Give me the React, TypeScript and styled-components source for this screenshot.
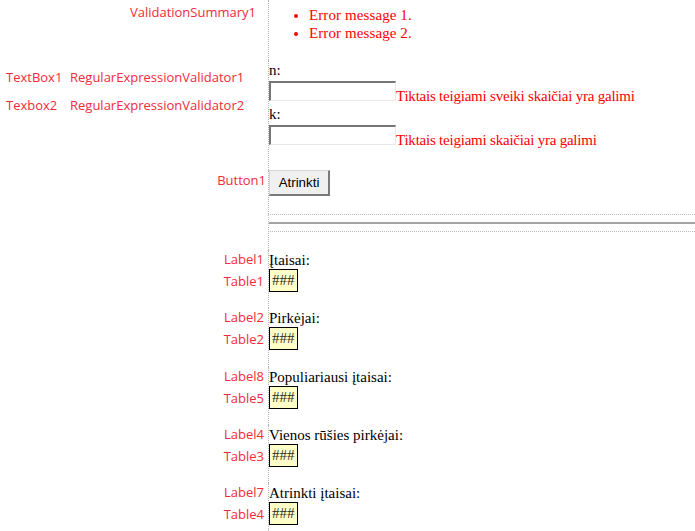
import React from "react";
import styled, { createGlobalStyle } from "styled-components";

const Global = createGlobalStyle`
  html, body { margin: 0; padding: 0; background: #fff; }
  body { width: 695px; height: 531px; overflow: hidden; }
`;

const Page = styled.div`
  display: grid;
  grid-template-columns: 268px 1fr;
  min-height: 531px;
`;

const Annot = styled.div<{ $pt?: number; $pr?: number }>`
  padding-top: ${(p) => p.$pt ?? 0}px;
  padding-right: ${(p) => p.$pr ?? 4}px;
  text-align: right;
  font-family: "Open Sans", "Noto Sans", sans-serif;
  font-size: 13px;
  line-height: 18px;
  color: #f22a3a;
  white-space: nowrap;
`;

const AnnotPairs = styled.div`
  display: grid;
  grid-template-columns: 64px auto;
  align-content: start;
  row-gap: 10px;
  padding: 8px 0 0 6px;
  font-family: "Open Sans", "Noto Sans", sans-serif;
  font-size: 13px;
  line-height: 18px;
  color: #f22a3a;
  white-space: nowrap;
`;

const AnnotStack = styled(Annot)`
  display: flex;
  flex-direction: column;
  align-items: flex-end;
  gap: 4px;
`;

const Content = styled.div<{ $pt?: number; $pb?: number }>`
  border-left: 1px dotted #b4b4b4;
  padding-top: ${(p) => p.$pt ?? 0}px;
  padding-bottom: ${(p) => p.$pb ?? 0}px;
  font-family: "Liberation Serif", "Times New Roman", serif;
  font-size: 15px;
  line-height: 18px;
  color: #000;
  min-width: 0;
`;

const ErrorList = styled.ul`
  margin: 6px 0 18px;
  padding-left: 40px;
  color: #ff0000;
  list-style: disc;
  letter-spacing: 0.1px;
`;

const FieldLabel = styled.div`
  margin-bottom: 2px;
`;

const FieldRow = styled.div`
  display: flex;
  align-items: flex-start;
`;

const TextInput = styled.input`
  box-sizing: border-box;
  width: 127px;
  height: 20px;
  margin: 0;
  padding: 0;
  background: #fff;
  border-style: solid;
  border-width: 2px 1px 1px 2px;
  border-color: #767676 #e8e8e8 #e8e8e8 #767676;
  outline: none;
  flex: none;
`;

const ValidatorMsg = styled.span`
  margin-top: 6px;
  color: #ff0000;
  white-space: nowrap;
  letter-spacing: -0.22px;
`;

const Button = styled.button`
  box-sizing: border-box;
  width: 61px;
  height: 26px;
  margin: 0;
  padding: 0;
  background: #f0f0f0;
  border-style: solid;
  border-width: 1px 2px 2px 1px;
  border-color: #d6d6d6 #7a7a7a #7a7a7a #d6d6d6;
  font-family: "Liberation Sans", Arial, sans-serif;
  font-size: 13.33px;
  color: #000;
  display: block;
`;

const HrBox = styled.div`
  margin-left: -1px;
  border-top: 1px dotted #bcbcbc;
  border-bottom: 1px dotted #bcbcbc;
  border-left: 1px dotted #bcbcbc;
  padding: 7px 0;
`;

const Rule = styled.hr`
  margin: 0;
  height: 2px;
  border: none;
  background: #a3a3a3;
`;

const GroupLabel = styled.div`
  white-space: nowrap;
`;

const DataBox = styled.div`
  box-sizing: border-box;
  width: 29px;
  height: 23px;
  border: 1px solid #000;
  background: #ffffc8;
  padding-left: 2px;
  line-height: 21px;
  color: #2a2a1a;
`;

const groups = [
  { label: "Label1", table: "Table1", text: "Įtaisai:" },
  { label: "Label2", table: "Table2", text: "Pirkėjai:" },
  { label: "Label8", table: "Table5", text: "Populiariausi įtaisai:" },
  { label: "Label4", table: "Table3", text: "Vienos rūšies pirkėjai:" },
  { label: "Label7", table: "Table4", text: "Atrinkti įtaisai:" },
];

export default function App() {
  return (
    <>
      <Global />
      <Page>
        <Annot $pt={3} $pr={12}>ValidationSummary1</Annot>
        <Content>
          <ErrorList>
            <li>Error message 1.</li>
            <li>Error message 2.</li>
          </ErrorList>
        </Content>

        <AnnotPairs>
          <span>TextBox1</span>
          <span>RegularExpressionValidator1</span>
          <span>Texbox2</span>
          <span>RegularExpressionValidator2</span>
        </AnnotPairs>
        <Content $pt={1} $pb={21}>
          <FieldLabel>n:</FieldLabel>
          <FieldRow>
            <TextInput type="text" />
            <ValidatorMsg>Tiktais teigiami sveiki skaičiai yra galimi</ValidatorMsg>
          </FieldRow>
          <FieldLabel>k:</FieldLabel>
          <FieldRow>
            <TextInput type="text" />
            <ValidatorMsg>Tiktais teigiami skaičiai yra galimi</ValidatorMsg>
          </FieldRow>
        </Content>

        <Annot $pt={1} $pr={2}>Button1</Annot>
        <Content $pb={18}>
          <Button>Atrinkti</Button>
        </Content>

        <Annot />
        <Content $pb={18}>
          <HrBox>
            <Rule />
          </HrBox>
        </Content>

        {groups.map((g) => (
          <React.Fragment key={g.label}>
            <AnnotStack>
              <span>{g.label}</span>
              <span>{g.table}</span>
            </AnnotStack>
            <Content $pt={1} $pb={16.3}>
              <GroupLabel>{g.text}</GroupLabel>
              <DataBox>###</DataBox>
            </Content>
          </React.Fragment>
        ))}
        <Annot />
        <Content />
      </Page>
    </>
  );
}
